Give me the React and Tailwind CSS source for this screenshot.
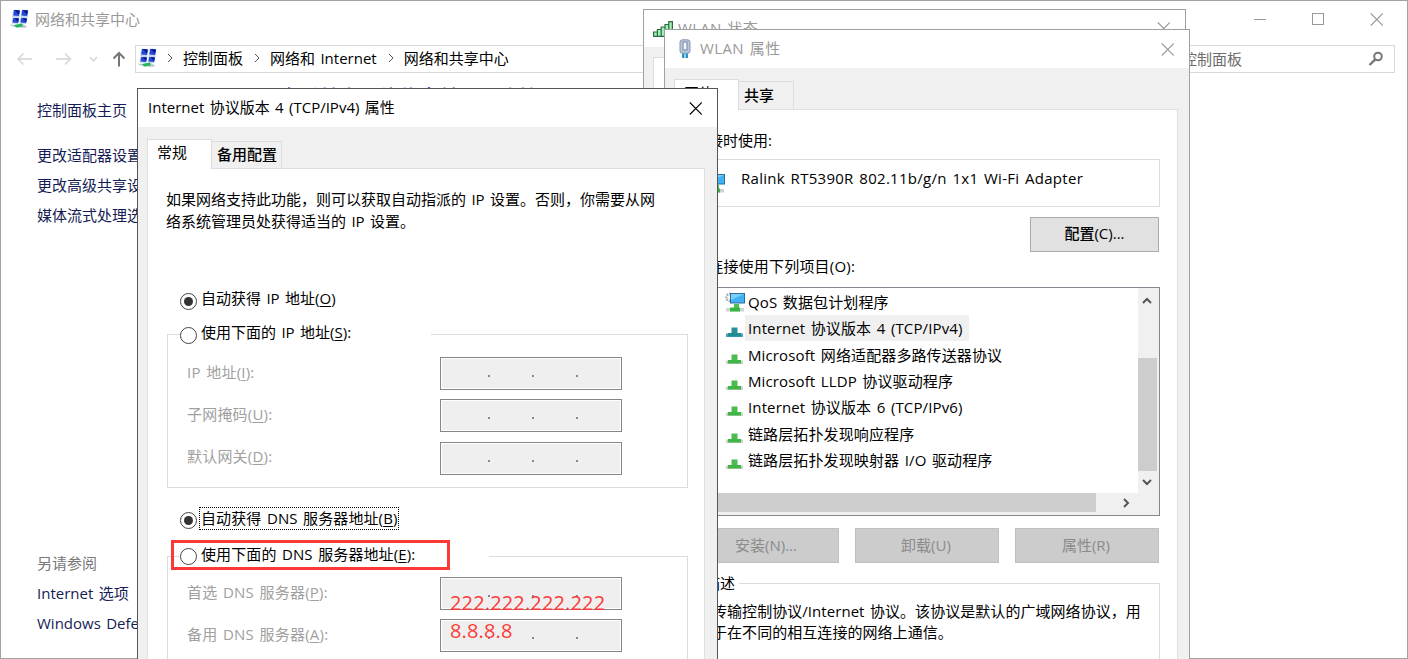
import clsx from 'clsx';

const sideLinks = ['更改适配器设置', '更改高级共享设置', '媒体流式处理选项'];

const items = [
  { name: 'QoS 数据包计划程序', kind: 'qos' },
  { name: 'Internet 协议版本 4 (TCP/IPv4)', kind: 'teal', selected: true },
  { name: 'Microsoft 网络适配器多路传送器协议', kind: 'green' },
  { name: 'Microsoft LLDP 协议驱动程序', kind: 'green' },
  { name: 'Internet 协议版本 6 (TCP/IPv6)', kind: 'green' },
  { name: '链路层拓扑发现响应程序', kind: 'green' },
  { name: '链路层拓扑发现映射器 I/O 驱动程序', kind: 'green' },
];

function NetworkIcon() {
  return (
    <svg width="20" height="20" viewBox="0 0 20 20">
      <path d="M3.500.500l7 .5-1 7.500-7.500-.5zM11.500.500l7 .5-1 7.500-7-.5zM2.500 8l7 .5-1 6.500-7-.5zM10.500 8l7 .5-1 6.500-7-.5z" fill="#c3d5ee" />
      <path d="M4 1l5.700.5-.8 5.500-5.700-.5zM12.200 1l5.700.5-.8 5.500-5.700-.5zM3.200 9l5.600.5-.8 4.500-5.500-.5zM11.200 9l5.600.5-.8 4.500-5.500-.5z" fill="#2148d6" />
      <path d="M4.500 1l5.200.5-.6 4zM12.700 1l5.200.5-.6 4zM4.500 9l4.300.5-.5 3.500zM12.500 9l4.300.5-.5 3.500z" fill="#06128a" />
      <path d="M0 15.500l5 .5 8-1 4 2.500-1.500 1.500-8-.5-6.500-1.500z" fill="#c3cacd" />
      <path d="M4 16l8-1.500.8 3-6.800 1z" fill="#1fb85a" />
    </svg>
  );
}

function CloseIcon() {
  return (
    <svg width="13" height="13" viewBox="0 0 13 13" fill="none" stroke="currentColor" strokeWidth="1.1">
      <path d="M.8.5l12 12M12.800.5l-12 12" />
    </svg>
  );
}

function SignalIcon() {
  return (
    <svg width="20" height="16" viewBox="0 0 20 16" fill="#a2eeb8" stroke="#2c6b41" strokeWidth="1.200">
      <path d="M.6 11h3.800v4.400H.6zM4.400 8.500h3.800v6.900H4.400zM8.200 6h3.800v9.400H8.200zM12 3.500h3.800v11.900H12zM15.800.6h3.600v14.800h-3.600z" />
    </svg>
  );
}

function PlugIcon() {
  return (
    <svg width="12" height="20" viewBox="0 0 12 20">
      <rect x="1" y=".8" width="10" height="13.500" rx="2.500" fill="#b8c8dd" stroke="#8494ac" />
      <rect x="4" y="3" width="4" height="8" fill="#eef3fa" stroke="#7587a3" />
      <path d="M3 14.500h2.500V19H3zM6.500 14.500H9V19H6.500z" fill="#2596c4" />
    </svg>
  );
}

function MonitorIcon() {
  return (
    <svg width="20" height="20" viewBox="0 0 20 20">
      <circle cx="5" cy="5.500" r="3.600" fill="none" stroke="#a3a9ae" strokeWidth="2.500" strokeDasharray="1.600 1" />
      <rect x="5.500" y="1.500" width="14" height="9.500" fill="#3fb2f6" stroke="#2b6f9c" />
      <path d="M6 2h13L6 8z" fill="#7dcdfa" />
      <path d="M9 12h5v4H9z" fill="#49bf55" />
      <path d="M1 16h18v3.500H1z" fill="#cfd3d3" />
      <path d="M5 15.500h10v4H5z" fill="#36b545" />
    </svg>
  );
}

function ProtocolIcon({ kind }) {
  if (kind === 'qos') return <MonitorIcon />;
  const teal = kind === 'teal';
  return (
    <svg width="20" height="20" viewBox="0 0 20 20">
      <path d="M1 15.500h17v3.500H1z" fill={teal ? '#4b9cc4' : '#c9d3c9'} />
      <path d="M6.500 9.500h6v6h-6z" fill={teal ? '#2b8f99' : '#4cbb52'} />
      <path d="M3 15h13v3.500H3z" fill={teal ? '#1f9090' : '#3fb546'} />
    </svg>
  );
}

function Chevron({ className }) {
  return (
    <svg width="10" height="10" viewBox="0 0 10 10" fill="none" stroke="currentColor" className={className}>
      <path d="M3 1l4 4-4 4" />
    </svg>
  );
}

function Radio({ checked }) {
  return (
    <span className="flex size-[17px] shrink-0 items-center justify-center rounded-full border-[1.5px] border-[#444] bg-white">
      {checked && <span className="size-[9px] rounded-full bg-[#333]" />}
    </span>
  );
}

function Key({ label, k, end = '' }) {
  return (
    <>
      {label}(<span className="underline decoration-1 underline-offset-2">{k}</span>){end}
    </>
  );
}

function IpField({ label, k }) {
  return (
    <div className="flex h-[33px] items-center">
      <span className="-mt-[4px] w-[253px] tracking-[0.2px] text-[#a0a0a0]"><Key label={label} k={k} end=":" /></span>
      <span className="flex h-[33px] w-[182px] items-center gap-[42px] border-[1.5px] border-[#868686] bg-[#efefef] pl-[47px] pt-[5px] ring-1 ring-inset ring-white">
        <i className="size-[2px] bg-[#8a8590]" />
        <i className="size-[2px] bg-[#8a8590]" />
        <i className="size-[2px] bg-[#8a8590]" />
      </span>
    </div>
  );
}

function CenterWindow() {
  return (
    <div className="flex h-[659px] flex-col border border-[#a3a3a3] bg-white">
      <div className="flex h-[36px] items-center pl-[9px] pr-[24px] text-[#999]">
        <NetworkIcon />
        <span className="ml-[5px] flex-1">网络和共享中心</span>
        <div className="flex items-center gap-[46px]">
          <span className="h-px w-[12px] bg-[#999]" />
          <span className="size-[12px] border border-[#999]" />
          <CloseIcon />
        </div>
      </div>
      <div className="mt-[8px] flex h-[28px] items-center pl-[16px] pr-[12px]">
        <svg width="110" height="18" viewBox="0 0 110 18" fill="none" stroke="#d3d3d3" strokeWidth="1.300">
          <path d="M15 9H1M6.500 3.500L1 9l5.500 5.500M39 9h14M48 3.500L53.500 9 48 14.500M73 7l3.500 4L80 7" />
          <path d="M102 16.500V3M96.500 8.500L102 3l5.500 5.500" stroke="#777" strokeWidth="2" />
        </svg>
        <div className="ml-[8px] flex h-[28px] w-[760px] items-center border border-[#d9d9d9] pb-[2px] pl-[2px]">
          <NetworkIcon />
          <Chevron className="ml-[7px] mr-[8px] text-[#555]" />
          <span>控制面板</span>
          <Chevron className="ml-[9px] mr-[8px] text-[#555]" />
          <span>网络和 Internet</span>
          <Chevron className="ml-[9px] mr-[8px] text-[#555]" />
          <span>网络和共享中心</span>
        </div>
        <div className="ml-[230px] flex h-[28px] flex-1 items-center border border-[#d9d9d9] pl-[18px] pr-[10px] text-[#6d6d6d]">
          <span className="ml-[38px] flex-1">控制面板</span>
          <svg width="16" height="16" viewBox="0 0 16 16" fill="none" stroke="#777" strokeWidth="2">
            <circle cx="10" cy="5.500" r="3.800" />
            <path d="M7.300 8.300L1.500 14" strokeWidth="2.400" />
          </svg>
        </div>
      </div>
      <div className="flex flex-1">
        <div className="flex w-[240px] flex-col whitespace-nowrap pl-[36px] leading-[30px] text-[#151c55]">
          <span className="mt-[22px]">控制面板主页</span>
          <div className="mt-[15px] flex flex-col">
            {sideLinks.map((l) => <span key={l}>{l}</span>)}
          </div>
          <span className="mt-[318px] text-[#777]">另请参阅</span>
          <span>Internet 选项</span>
          <span>Windows Defender 防火墙</span>
        </div>
        <h1 className="ml-[38px] mt-[11px] h-[28px] text-[20px] leading-[28px] text-[#003399]">查看基本网络信息并设置连接</h1>
      </div>
    </div>
  );
}

function StatusWindow() {
  return (
    <div className="absolute left-[643px] top-[9px] isolate flex h-[700px] w-[543px] flex-col border border-[#a0a0a0] bg-[#f0f0f0]">
      <div className="flex h-[37px] items-center bg-white pl-[9px] pr-[15px] text-[#999]">
        <SignalIcon />
        <span className="-mt-[2px] ml-[5px] flex-1 tracking-[0.3px]">WLAN 状态</span>
        <CloseIcon />
      </div>
      <div className="mx-[9px] mt-[10px] flex-1 border border-[#dcdcdc] bg-white" />
    </div>
  );
}

function ScrollBars() {
  return (
    <div className="flex w-[21px] flex-col items-center bg-[#f0f0f0] pr-[3px] text-[#555]">
      <Chevron className="mt-[8px] -rotate-90 stroke-2" />
      <span className="mt-[52px] h-[113px] w-[19px] shrink-0 bg-[#cdcdcd]" />
      <Chevron className="mt-[6px] rotate-90 stroke-2" />
    </div>
  );
}

function PropertiesWindow() {
  return (
    <div className="absolute left-[664px] top-[29px] isolate flex h-[700px] w-[526px] flex-col border border-[#a0a0a0] bg-[#f0f0f0]">
      <div className="flex h-[38px] shrink-0 items-center bg-white pl-[14px] pr-[15px] text-[#999]">
        <PlugIcon />
        <span className="-mt-[2px] ml-[9px] flex-1 tracking-[0.4px]">WLAN 属性</span>
        <CloseIcon />
      </div>
      <div className="ml-[9px] mt-[11px] flex h-[30px] shrink-0 items-end">
        <span className="z-10 -mb-px h-[31px] w-[65px] border border-b-0 border-[#dcdcdc] bg-white pl-[9px] pt-[2px]">网络</span>
        <span className="-ml-px h-[28px] w-[56px] border border-b-0 border-[#dcdcdc] pl-[5px] pt-[2px] font-medium">共享</span>
      </div>
      <div className="ml-[9px] mr-[11px] flex flex-1 flex-col border border-[#dfdfdf] bg-white pl-[18px] pr-[17px]">
        <span className="mt-[20px] h-[20px] leading-[20px]">连接时使用:</span>
        <div className="mt-[9px] flex h-[48px] items-center border-[1.5px] border-[#dcdcdc] pl-[11px]">
          <MonitorIcon />
          <span className="-mt-[10px] ml-[16px] tracking-[0.28px]">Ralink RT5390R 802.11b/g/n 1x1 Wi-Fi Adapter</span>
        </div>
        <div className="mr-px mt-[10px] flex h-[35px] w-[129px] items-center justify-center self-end border-[1.5px] border-[#acacac] bg-[#e1e1e1] pb-[3px] font-medium">配置(C)...</div>
        <span className="mt-[4px] h-[20px] leading-[20px] tracking-[0.2px]">此连接使用下列项目(O):</span>
        <div className="mt-[11px] flex h-[229px] flex-col border-[1.5px] border-[#828790]">
          <div className="flex h-[205px]">
            <div className="flex flex-1 flex-col pl-[31px] pt-px">
              {items.map((it) => (
                <div key={it.name} className="flex h-[26.3px] items-center">
                  <ProtocolIcon kind={it.kind} />
                  <span className={clsx('flex h-[26px] items-center whitespace-pre pl-[3px] pr-[6px] tracking-[0.12px]', it.selected && 'bg-[#f0f0f0]')}>{it.name}</span>
                </div>
              ))}
            </div>
            <ScrollBars />
          </div>
          <div className="flex h-[19px] items-center bg-[#f0f0f0] text-[#555]">
            <span className="h-[19px] w-[402px] bg-[#cdcdcd]" />
            <Chevron className="ml-[25px] stroke-2" />
          </div>
          <div className="flex-1 bg-[#f0f0f0]" />
        </div>
        <div className="mt-[12px] flex h-[35px] justify-between pl-[2px] pr-px text-[#8b8b8b]">
          {['安装(N)...', '卸载(U)', '属性(R)'].map((b) => (
            <span key={b} className="flex w-[144px] items-center justify-center border border-[#bfbfbf] bg-[#cccccc] pb-[2px] pr-[2px]">{b}</span>
          ))}
        </div>
        <div className="mt-[20px] h-[200px] border border-[#dcdcdc] pl-[18px]">
          <div className="-ml-[9px] -mt-[11px] h-[20px] w-[36px] bg-white pl-[2px] leading-[20px]">描述</div>
          <p className="mt-[8px] whitespace-nowrap leading-[21px] tracking-[0.05px]">
            传输控制协议/Internet 协议。该协议是默认的广域网络协议，用<br />于在不同的相互连接的网络上通信。
          </p>
        </div>
      </div>
    </div>
  );
}

function Ipv4Dialog() {
  return (
    <div className="absolute left-[137px] top-[88px] isolate flex h-[700px] w-[581px] flex-col border border-[#555] bg-[#f0f0f0]">
      <div className="flex h-[38px] shrink-0 items-center bg-white pl-[10px] pr-[15px]">
        <span className="-mt-[2px] flex-1">Internet 协议版本 4 (TCP/IPv4) 属性</span>
        <CloseIcon />
      </div>
      <div className="ml-[9px] mt-[12px] flex h-[29px] shrink-0 items-end">
        <span className="z-10 -mb-px h-[30px] w-[65px] border border-b-0 border-[#dcdcdc] bg-white pl-[9px] pt-px">常规</span>
        <span className="-ml-px h-[27px] w-[71px] border border-b-0 border-[#dcdcdc] pl-[5px] pt-px font-medium">备用配置</span>
      </div>
      <div className="ml-[9px] mr-[12px] flex flex-1 flex-col border border-[#dfdfdf] bg-white pl-[19px] pr-[16px]">
        <p className="-ml-px mt-[20px] h-[43px] whitespace-nowrap leading-[21.5px]">
          如果网络支持此功能，则可以获取自动指派的 IP 设置。否则，你需要从网<br />络系统管理员处获得适当的 IP 设置。
        </p>
        <div className="mt-[59px] flex h-[20px] items-center pl-[13px]">
          <Radio checked />
          <span className="-mt-[6px] ml-[4px]"><Key label="自动获得 IP 地址" k="O" /></span>
        </div>
        <div className="mt-[23px] h-[154px] border border-[#dcdcdc]">
          <div className="-mt-[12px] ml-[12px] flex h-[24px] w-[251px] items-center bg-white">
            <Radio />
            <span className="-mt-[6px] ml-[4px]"><Key label="使用下面的 IP 地址" k="S" end=":" /></span>
          </div>
          <div className="mt-[10px] flex flex-col gap-[9.3px] pl-[19px]">
            <IpField label="IP 地址" k="I" />
            <IpField label="子网掩码" k="U" />
            <IpField label="默认网关" k="D" />
          </div>
        </div>
        <div className="mt-[21px] flex h-[22px] items-center pl-[13px]">
          <Radio checked />
          <span className="-mt-[4px] ml-[2px] flex h-[23px] items-center border border-dotted border-black px-px pb-px tracking-[0.1px]"><span><Key label="自动获得 DNS 服务器地址" k="B" /></span></span>
        </div>
        <div className="mt-[25px] h-[154px] border border-[#dcdcdc]">
          <div className="-mt-[13px] ml-[12px] flex h-[24px] w-[309px] items-center bg-white">
            <Radio />
            <span className="-mt-[5px] ml-[4px] tracking-[0.1px]"><Key label="使用下面的 DNS 服务器地址" k="E" end=":" /></span>
          </div>
          <div className="mt-[9px] flex flex-col gap-[9.3px] pl-[19px]">
            <IpField label="首选 DNS 服务器" k="P" />
            <IpField label="备用 DNS 服务器" k="A" />
          </div>
        </div>
      </div>
    </div>
  );
}

export default function App() {
  return (
    <div className="relative h-[659px] w-[1408px] overflow-hidden whitespace-nowrap bg-white font-['Open_Sans','Noto_Sans_CJK_SC',sans-serif] text-[15px] leading-[22px] text-black [word-spacing:1.5px]">
      <CenterWindow />
      <StatusWindow />
      <PropertiesWindow />
      <Ipv4Dialog />
      <div className="absolute left-[171px] top-[540px] h-[30px] w-[279px] border-3 border-[#fb3a38]" />
      <div className="absolute left-[450px] top-[589px] text-[20px] leading-[28px] tracking-[0.15px] text-[#fb3a38]">
        <div>222.222.222.222</div>
        <div>8.8.8.8</div>
      </div>
    </div>
  );
}
